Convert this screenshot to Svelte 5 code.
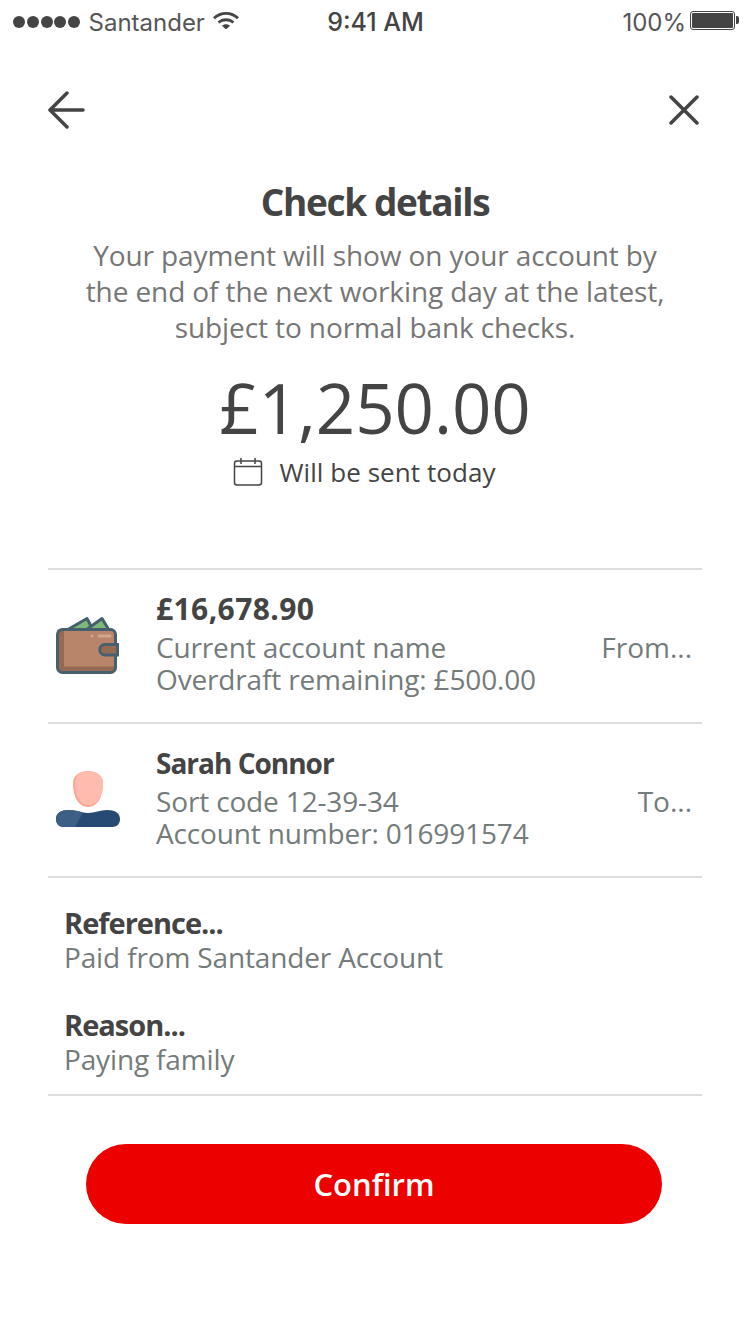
<script>
	let accounts = [
		{
			title: '£16,678.90',
			money: true,
			lines: ['Current account name', 'Overdraft remaining: £500.00'],
			hint: 'From...',
			icon: 'wallet'
		},
		{
			title: 'Sarah Connor',
			money: false,
			lines: ['Sort code 12-39-34', 'Account number: 016991574'],
			hint: 'To...',
			icon: 'person'
		}
	];
	let notes = [
		{ label: 'Reference...', value: 'Paid from Santander Account' },
		{ label: 'Reason...', value: 'Paying family' }
	];
</script>

<div class="app">
	<div class="status">
		<div class="status-left">
			<span class="dots"><i></i><i></i><i></i><i></i><i></i></span>
			<span class="carrier">Santander</span>
			<svg class="wifi" width="26" height="18" viewBox="0 0 26 18">
				<path d="M0 6.200C7-.8 19-.8 26 6.200l-2 2.100C17.800 2.300 8.200 2.300 2 8.300z" fill="#444" />
				<path d="M4.600 10.500c4.700-4.500 12.100-4.500 16.800 0l-2 2.100c-3.600-3.200-9.200-3.200-12.800 0z" fill="#444" />
				<path d="M9 14.700c2.400-2 5.600-2 8 0L13 18.500z" fill="#444" />
			</svg>
		</div>
		<div class="time">9:41 AM</div>
		<div class="status-right">
			<span>100%</span>
			<span class="battery"><b></b></span>
			<span class="nub"></span>
		</div>
	</div>

	<div class="nav">
		<svg width="38" height="38" viewBox="0 0 38 38" fill="none" stroke="#444" stroke-width="3.500" stroke-linecap="round" stroke-linejoin="round">
			<path d="M3 19h33M20 2 3 19l17 17" />
		</svg>
		<svg width="30" height="30" viewBox="0 0 30 30" fill="none" stroke="#444" stroke-width="3.500" stroke-linecap="round">
			<path d="M2 2l26 26M28 2 2 28" />
		</svg>
	</div>

	<div class="summary">
		<h1>Check details</h1>
		<p>Your payment will show on your account by<br />the end of the next working day at the latest,<br />subject to normal bank checks.</p>
		<div class="amount">£1,250.00</div>
		<div class="when">
			<svg width="30" height="30" viewBox="0 0 30 30" fill="none" stroke="#444" stroke-width="1.500">
				<rect x="1.500" y="4" width="27" height="24" rx="2.500" />
				<path d="M1.500 9.500h27M8 1v6M22 1v6" />
			</svg>
			<span>Will be sent today</span>
		</div>
	</div>

	<div class="rows">
		{#each accounts as row}
			<div class="row">
				<div class="icon">
					{#if row.icon === 'wallet'}
						<svg width="66" height="62" viewBox="0 0 66 62">
							<path d="M12 15 32 3.500 38 15z" fill="#7cba78" stroke="#47606e" stroke-width="3" stroke-linejoin="round" />
							<path d="M31 15 47 3.500 54 15z" fill="#7cba78" stroke="#47606e" stroke-width="3" stroke-linejoin="round" />
							<rect x="2.500" y="14.500" width="58" height="43" rx="5" fill="#b9856a" />
							<path d="M2.500 14.500H9v37h51.500v1a5 5 0 0 1-5 5h-49a4 4 0 0 1-4-4z" fill="#966a52" />
							<rect x="2.500" y="14.500" width="58" height="43" rx="5" fill="none" stroke="#47606e" stroke-width="3" />
							<path d="M62.500 29.500H50a5 5 0 0 0 0 10.500h12.500z" fill="#966a52" stroke="#47606e" stroke-width="3" />
							<circle cx="37" cy="21" r="1.500" fill="#d3a68e" />
							<rect x="42.500" y="19.500" width="14" height="3" rx="1.500" fill="#d3a68e" />
						</svg>
					{:else}
						<svg width="66" height="60" viewBox="0 0 66 60">
							<path d="M1 49c0-6 5-9 13-9 7 0 12 3 19 3s12-3 19-3c8 0 13 3 13 9 0 5-3 8-8 8H9c-5 0-8-3-8-8z" fill="#274a75" />
							<path d="M1 49c0-6 5-9 13-9 5 0 10 1 14 2.500L20 57H9c-5 0-8-3-8-8z" fill="#3d5f85" />
							<path d="M18 13C18 5 25 1 33 1s15 4 15 12c0 13-5 24-15 24S18 26 18 13z" fill="#fba994" />
							<path d="M20 13C20 5 26 1 33 1s15 4 15 12c0 12-5 22-14 22-9 0-14-10-14-22z" fill="#ffbcae" />
						</svg>
					{/if}
				</div>
				<div class="info">
					<div class="title" class:money={row.money}>{row.title}</div>
					{#each row.lines as line}
						<div class="line">{line}</div>
					{/each}
				</div>
				<div class="hint">{row.hint}</div>
			</div>
		{/each}
		<div class="notes">
			{#each notes as note}
				<div class="note">
					<div class="title">{note.label}</div>
					<div class="line">{note.value}</div>
				</div>
			{/each}
		</div>
	</div>

	<div class="actions">
		<button>Confirm</button>
	</div>
</div>

<style>
	:global(body) {
		background: #fff;
	}

	.app {
		width: 750px;
		height: 1334px;
		overflow: hidden;
		font-family: 'Open Sans', 'Noto Sans', sans-serif;
		color: #444;
	}

	.status {
		display: grid;
		grid-template-columns: 1fr auto 1fr;
		align-items: center;
		height: 44px;
		padding: 0 11px 0 13px;
		font-family: Inter, sans-serif;
		font-size: 24px;
		color: #555;
	}

	.status-left {
		display: flex;
		align-items: center;
		gap: 8.500px;
	}

	.dots {
		display: flex;
		gap: 1.750px;
	}

	.dots i {
		width: 12px;
		height: 12px;
		border-radius: 50%;
		background: #444;
	}

	.wifi {
		margin-top: -4px;
	}

	.time {
		font-weight: 500;
		color: #444;
		font-size: 25px;
		padding-right: 1px;
	}

	.status-right {
		display: flex;
		align-items: center;
		justify-content: flex-end;
	}

	.battery {
		width: 41px;
		height: 15px;
		margin: -4px 0 0 4px;
		border: 1px solid #444;
		border-radius: 3px;
		padding: 1px;
		display: flex;
	}

	.battery b {
		flex: 1;
		background: #444;
		border-radius: 1px;
	}

	.nub {
		width: 3px;
		height: 8px;
		margin: -4px 0 0 1px;
		background: #444;
		border-radius: 0 2px 2px 0;
	}

	.nav {
		display: flex;
		justify-content: space-between;
		align-items: center;
		padding: 47px 51px 0 47px;
	}

	.summary {
		display: flex;
		flex-direction: column;
		align-items: center;
		margin-top: 51px;
		text-align: center;
	}

	h1 {
		margin: 0;
		font-size: 37px;
		line-height: 44px;
		font-weight: 700;
		letter-spacing: -1.350px;
		color: #444;
	}

	p {
		margin: 13px 0 0;
		font-size: 28px;
		line-height: 36px;
		letter-spacing: -0.100px;
		color: #767676;
	}

	.amount {
		margin-top: 20px;
		font-size: 69px;
		line-height: 84px;
		letter-spacing: -0.100px;
		color: #444;
	}

	.when {
		display: flex;
		align-items: center;
		gap: 16px;
		font-size: 26px;
		line-height: 36px;
		letter-spacing: 0.060px;
		margin-top: 5px;
		padding-right: 21px;
	}

	.rows {
		margin: 78px 48px 0;
		border-top: 2px solid #dedede;
	}

	.row {
		display: flex;
		align-items: center;
		height: 152px;
		border-bottom: 2px solid #dedede;
	}

	.icon {
		width: 108px;
		padding-left: 7px;
		box-sizing: border-box;
		display: flex;
	}

	.info {
		flex: 1;
		padding-bottom: 6px;
	}

	.title {
		font-size: 29px;
		line-height: 36px;
		font-weight: 700;
		letter-spacing: -1px;
		color: #444;
	}

	.info .title {
		margin-bottom: 4px;
		font-size: 28px;
	}

	.info .title.money {
		font-size: 30px;
		letter-spacing: 0.400px;
	}

	.line {
		font-size: 28px;
		line-height: 32px;
		letter-spacing: -0.150px;
		color: #747b7b;
	}

	.hint {
		font-size: 28px;
		color: #747b7b;
		padding: 2px 10px 0 0;
	}

	.notes {
		padding: 27px 16px 19px;
		border-bottom: 2px solid #dedede;
	}

	.note + .note {
		margin-top: 34px;
	}

	.actions {
		display: flex;
		justify-content: center;
		margin-top: 48px;
		padding-right: 2px;
	}

	button {
		width: 576px;
		height: 80px;
		border: none;
		border-radius: 40px;
		background: #ec0000;
		color: #fff;
		font-family: inherit;
		font-size: 31px;
		font-weight: 600;
	}
</style>
